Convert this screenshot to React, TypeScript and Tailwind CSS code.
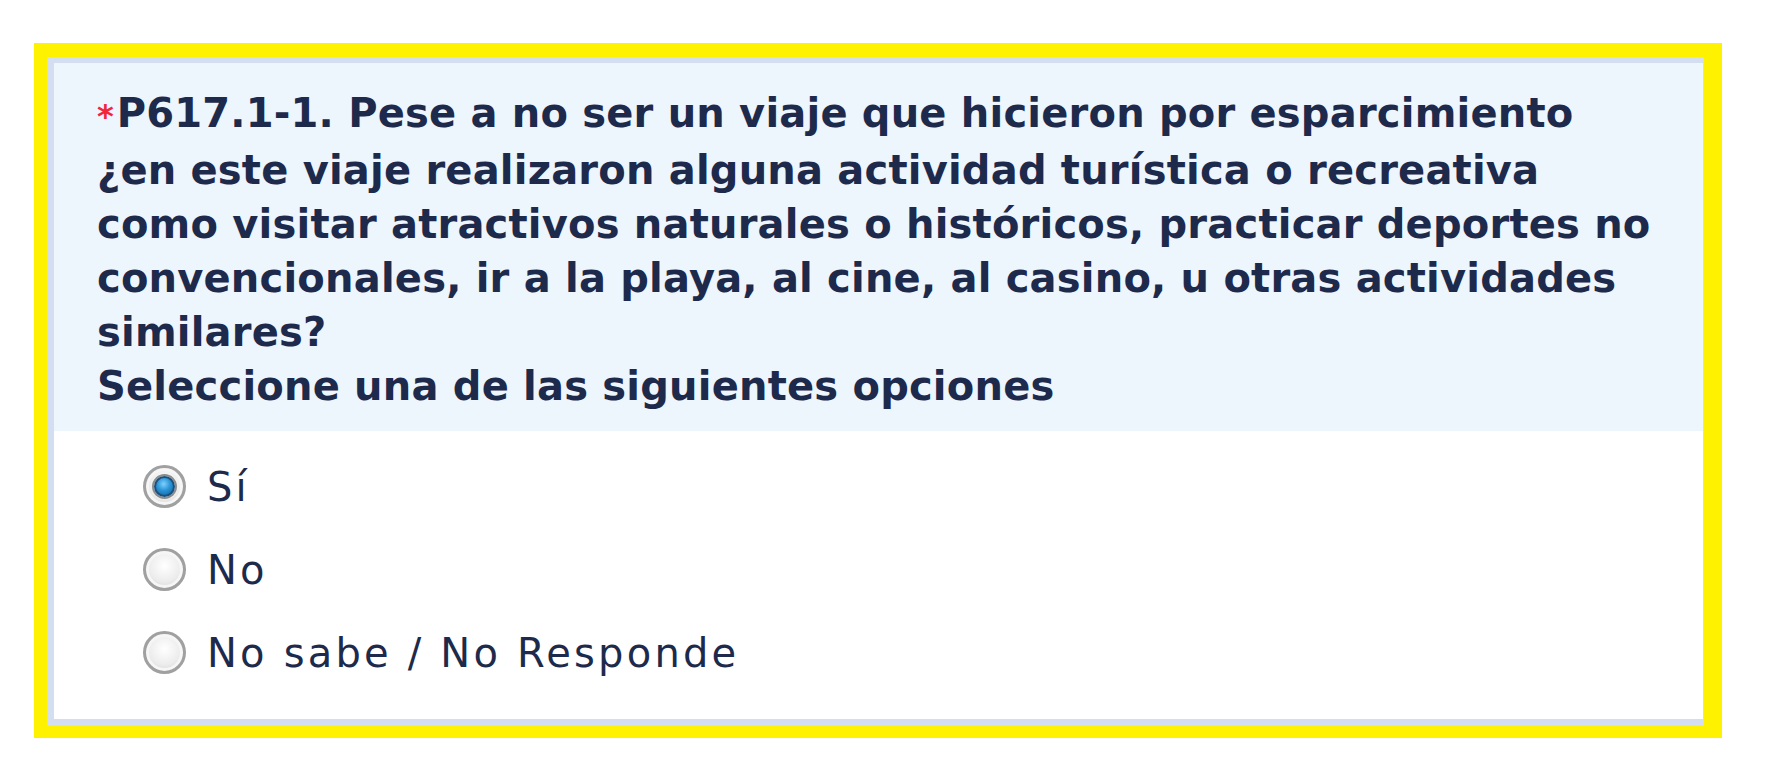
import { useState } from "react";

const options = ["Sí", "No", "No sabe / No Responde"];

function Radio({ checked }: { checked: boolean }) {
  return (
    <span className="flex h-[43px] w-[43px] shrink-0 items-center justify-center rounded-full border-[3px] border-[#a0a0a0] bg-[radial-gradient(circle_at_50%_40%,#ffffff_0%,#ececec_55%,#c8c8c8_100%)] shadow-[inset_0_0_0_3px_#f6f6f6]">
      {checked && (
        <span className="h-[21px] w-[21px] rounded-full border-2 border-[#1d4f7a] bg-[radial-gradient(circle_at_45%_35%,#7fd0ff_0%,#2a95d6_45%,#0f5c98_100%)] shadow-[0_0_0_2px_#8c8c8c]" />
      )}
    </span>
  );
}

export default function App() {
  const [selected, setSelected] = useState(0);

  return (
    <div className="min-h-screen bg-white pt-[43px] pl-[34px] font-['DejaVu_Sans',Verdana,sans-serif]">
      <div className="w-[1688px] border-t-[14px] border-r-[18px] border-b-[12px] border-l-[13px] border-[#fff200]">
        <div className="border-t-[6px] border-b-[7px] border-l-[7px] border-r border-[#d3dff0] bg-white">
          {/* Question header */}
          <div className="bg-[#edf5fd] pt-[23px] pr-[20px] pb-[18px] pl-[43px] text-[40px] leading-[54px] font-bold tracking-[0.2px] text-[#1e2a4b]">
            <span className="mr-[3px] text-[32px] tracking-normal text-[#f2263a]">*</span>
            P617.1-1. Pese a no ser un viaje que hicieron por esparcimiento
            <br />
            ¿en este viaje realizaron alguna actividad turística o recreativa
            <br />
            como visitar atractivos naturales o históricos, practicar deportes no
            <br />
            convencionales, ir a la playa, al cine, al casino, u otras actividades
            <br />
            similares?
            <br />
            Seleccione una de las siguientes opciones
          </div>

          {/* Options */}
          <div className="flex flex-col gap-[40px] pt-[34px] pb-[45px] pl-[89px]">
            {options.map((opt, i) => (
              <label
                key={opt}
                onClick={() => setSelected(i)}
                className="flex h-[43px] cursor-pointer items-center gap-[21px] text-[40px] tracking-[3.2px] text-[#1e2a4b]"
              >
                <Radio checked={selected === i} />
                <span>{opt}</span>
              </label>
            ))}
          </div>
        </div>
      </div>
    </div>
  );
}
